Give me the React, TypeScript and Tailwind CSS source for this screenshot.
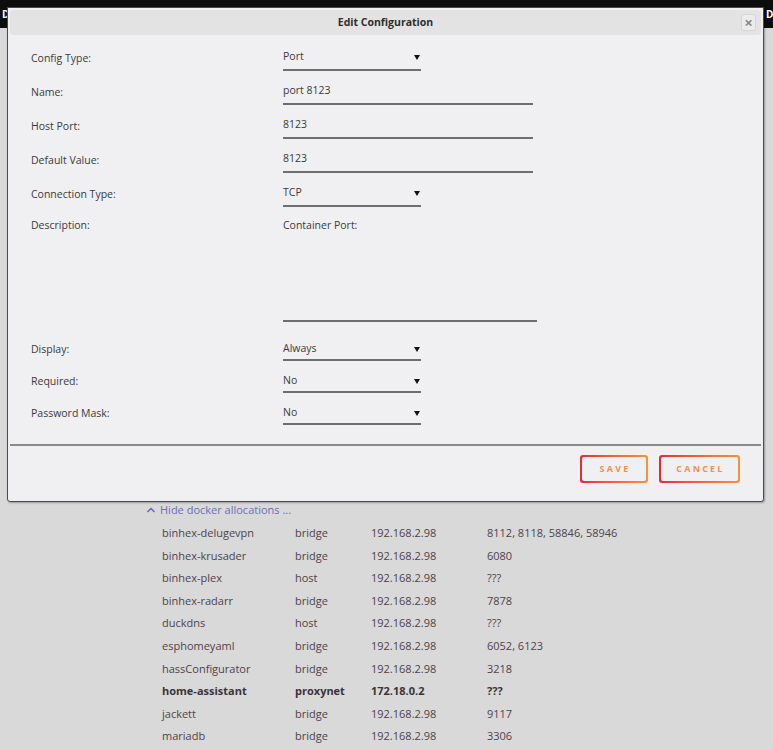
import React from 'react';
import { ChevronUp } from 'lucide-react';

interface Allocation {
  name: string;
  network: string;
  ip: string;
  ports: string;
  current?: boolean;
}

const allocations: Allocation[] = [
  { name: 'binhex-delugevpn', network: 'bridge', ip: '192.168.2.98', ports: '8112, 8118, 58846, 58946' },
  { name: 'binhex-krusader', network: 'bridge', ip: '192.168.2.98', ports: '6080' },
  { name: 'binhex-plex', network: 'host', ip: '192.168.2.98', ports: '???' },
  { name: 'binhex-radarr', network: 'bridge', ip: '192.168.2.98', ports: '7878' },
  { name: 'duckdns', network: 'host', ip: '192.168.2.98', ports: '???' },
  { name: 'esphomeyaml', network: 'bridge', ip: '192.168.2.98', ports: '6052, 6123' },
  { name: 'hassConfigurator', network: 'bridge', ip: '192.168.2.98', ports: '3218' },
  { name: 'home-assistant', network: 'proxynet', ip: '172.18.0.2', ports: '???', current: true },
  { name: 'jackett', network: 'bridge', ip: '192.168.2.98', ports: '9117' },
  { name: 'mariadb', network: 'bridge', ip: '192.168.2.98', ports: '3306' },
];

const Arrow = () => (
  <svg width="6" height="6" viewBox="0 0 6 6" className="shrink-0">
    <polygon points="0,1 6,1 3,6" fill="#111" />
  </svg>
);

const SelectBox = ({ value, tall = true }: { value: string; tall?: boolean }) => (
  <div
    className={`flex w-[138px] items-center justify-between border-b-2 border-[#6e6e6e] pr-[1px] ${
      tall ? 'h-[24px] pb-[2px]' : 'h-[22px] pb-[1px]'
    }`}
  >
    <span>{value}</span>
    <Arrow />
  </div>
);

const TextBox = ({ value }: { value: string }) => (
  <div className="flex h-[24px] w-[250px] items-center border-b-2 border-[#6e6e6e] pb-[3px]">{value}</div>
);

const Row = ({ label, children }: { label: string; children: React.ReactNode }) => (
  <div className="flex items-center">
    <div className="w-[252px] shrink-0">{label}</div>
    {children}
  </div>
);

const OutlineButton = ({ label, width }: { label: string; width: string }) => (
  <div className={`rounded-[3px] bg-gradient-to-r from-[#e22a34] to-[#f7923a] p-[2px] ${width}`}>
    <div className="flex h-[24px] items-center justify-center rounded-[2px] bg-[#f0f0f2] pl-[2px] text-[9px] font-bold tracking-[2.2px] text-[#f1904c]">
      {label}
    </div>
  </div>
);

export default function App() {
  return (
    <div
      className="relative h-[750px] w-[773px] overflow-hidden bg-[#d9d9d9] text-[11px] text-[#3a3a3a]"
      style={{ fontFamily: '"Open Sans", "Noto Sans", sans-serif' }}
    >
      {/* top bar, mostly hidden by the dialog */}
      <div className="flex h-[28px] items-center justify-between bg-[#0d0d0d] text-[10px] font-bold text-white">
        <span className="pl-[2px]">DASHBOARD</span>
        <span className="w-[8px] overflow-hidden whitespace-nowrap pl-[1px]">DC</span>
      </div>

      {/* allocations list below the dialog */}
      <div className="pl-[145px] pt-[474px]">
        <div className="flex h-[16px] items-center gap-[3px] text-[#6c70b4]">
          <ChevronUp size={12} strokeWidth={3.5} />
          <span className="text-[11px]">Hide docker allocations ...</span>
        </div>
        <div className="pl-[17px] pt-[4px] text-[#4f4249]">
          {allocations.map((a) => (
            <div
              key={a.name}
              className={`flex h-[22.6px] items-center ${a.current ? 'font-bold text-[#3b3438]' : ''}`}
            >
              <div className="w-[133px]">{a.name}</div>
              <div className="w-[76px]">{a.network}</div>
              <div className="w-[116px]">{a.ip}</div>
              <div>{a.ports}</div>
            </div>
          ))}
        </div>
      </div>

      {/* dialog */}
      <div className="absolute left-[7px] top-[7px] flex h-[495px] w-[757px] flex-col rounded-b-[3px] border border-[#4a4a4a] bg-[#f0f0f2] shadow-[1px_1px_2px_rgba(0,0,0,0.3)]">
        <div className="relative mx-[2px] mt-[2px] flex h-[25px] items-center justify-center rounded-[4px] bg-[#e3e3e3]">
          <span className="text-[10.5px] font-bold text-[#2e2e2e]">Edit Configuration</span>
          <div className="absolute right-[5px] top-[4px] flex h-[17px] w-[15px] items-center justify-center rounded-[3px] border border-[#d6d6d6] bg-[#ececec] text-[15px] font-bold leading-none text-[#8a8a8a]">
            ×
          </div>
        </div>

        <div className="text-[10.5px]">
          <div className="flex flex-col gap-[10px] pl-[23px] pt-[12px]">
            <Row label="Config Type:">
              <SelectBox value="Port" />
            </Row>
            <Row label="Name:">
              <TextBox value="port 8123" />
            </Row>
            <Row label="Host Port:">
              <TextBox value="8123" />
            </Row>
            <Row label="Default Value:">
              <TextBox value="8123" />
            </Row>
            <Row label="Connection Type:">
              <SelectBox value="TCP" />
            </Row>
            <div className="flex items-start leading-[16px]">
              <div className="w-[252px] shrink-0">Description:</div>
              <div className="h-[105px] w-[254px] border-b-2 border-[#6e6e6e]">Container Port:</div>
            </div>
          </div>

          <div className="flex flex-col gap-[10px] pl-[23px] pt-[17px]">
            <Row label="Display:">
              <SelectBox value="Always" tall={false} />
            </Row>
            <Row label="Required:">
              <SelectBox value="No" tall={false} />
            </Row>
            <Row label="Password Mask:">
              <SelectBox value="No" tall={false} />
            </Row>
          </div>
        </div>

        <div className="mx-[2px] mt-[19px] border-t-2 border-[#8a8a8a]" />

        <div className="flex justify-end gap-[11px] pr-[23px] pt-[9px]">
          <OutlineButton label="SAVE" width="w-[68px]" />
          <OutlineButton label="CANCEL" width="w-[81px]" />
        </div>
      </div>
    </div>
  );
}
